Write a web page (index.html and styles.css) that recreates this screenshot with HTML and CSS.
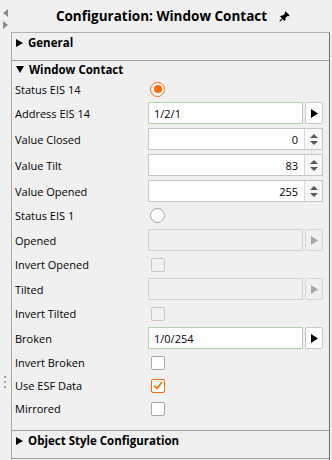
FILE: index.html
```html
<!DOCTYPE html>
<html>
<head>
<meta charset="utf-8">
<link rel="stylesheet" href="styles.css">
</head>
<body>
<div class="app">
  <div class="side">
    <svg class="arr" width="5" height="8" viewBox="0 0 5 8"><path d="M5 0 L0 4 L5 8 Z" fill="#8a8a8a"/></svg>
    <svg class="arr" width="5" height="8" viewBox="0 0 5 8"><path d="M0 0 L5 4 L0 8 Z" fill="#8a8a8a"/></svg>
    <div class="grip"><i></i><i></i><i></i></div>
  </div>
  <div class="main">
    <div class="title">
      <span>Configuration: Window Contact</span>
      <svg width="11" height="11" viewBox="0 0 16 16"><path d="M9.5 0.5 L15.5 6.5 L14 7.5 L12.3 7.3 L9.3 10.3 L9.6 12.8 L8 14.4 L1.6 8 L3.2 6.4 L5.7 6.7 L8.7 3.7 L8.5 2 Z" fill="#000"/><path d="M5 11 L1 15" stroke="#000" stroke-width="1.6"/></svg>
    </div>
    <div class="panel">
      <section class="sec collapsed">
        <div class="sec-head"><svg width="7" height="8" viewBox="0 0 7 8"><path d="M0 0 L7 4 L0 8 Z"/></svg><span>General</span></div>
      </section>
      <section class="sec open">
        <div class="sec-head"><svg width="8" height="7" viewBox="0 0 8 7"><path d="M0 0 L8 0 L4 7 Z"/></svg><span>Window Contact</span></div>
        <div class="row first"><span class="lbl">Status EIS 14</span><span class="radio on"></span></div>
        <div class="row inp"><span class="lbl">Address EIS 14</span><div class="ctl"><div class="field green">1/2/1</div><div class="btn"><svg width="7" height="9" viewBox="0 0 7 9"><path d="M0 0 L7 4.5 L0 9 Z"/></svg></div></div></div>
        <div class="row inp"><span class="lbl">Value Closed</span><div class="ctl"><div class="num"><span class="val">0</span><span class="spin"><svg width="8" height="11" viewBox="0 0 8 11"><path d="M0 4 L4 0 L8 4 Z M0 7 L8 7 L4 11 Z" fill="#5a5a5a"/></svg></span></div></div></div>
        <div class="row inp"><span class="lbl">Value Tilt</span><div class="ctl"><div class="num"><span class="val">83</span><span class="spin"><svg width="8" height="11" viewBox="0 0 8 11"><path d="M0 4 L4 0 L8 4 Z M0 7 L8 7 L4 11 Z" fill="#5a5a5a"/></svg></span></div></div></div>
        <div class="row inp"><span class="lbl">Value Opened</span><div class="ctl"><div class="num"><span class="val">255</span><span class="spin"><svg width="8" height="11" viewBox="0 0 8 11"><path d="M0 4 L4 0 L8 4 Z M0 7 L8 7 L4 11 Z" fill="#5a5a5a"/></svg></span></div></div></div>
        <div class="row chk"><span class="lbl">Status EIS 1</span><span class="radio"></span></div>
        <div class="row inp"><span class="lbl">Opened</span><div class="ctl"><div class="field dis"></div><div class="btn dis"><svg width="7" height="9" viewBox="0 0 7 9"><path d="M0 0 L7 4.5 L0 9 Z"/></svg></div></div></div>
        <div class="row chk"><span class="lbl">Invert Opened</span><span class="box dis"></span></div>
        <div class="row inp"><span class="lbl">Tilted</span><div class="ctl"><div class="field dis"></div><div class="btn dis"><svg width="7" height="9" viewBox="0 0 7 9"><path d="M0 0 L7 4.5 L0 9 Z"/></svg></div></div></div>
        <div class="row chk"><span class="lbl">Invert Tilted</span><span class="box dis"></span></div>
        <div class="row inp"><span class="lbl">Broken</span><div class="ctl"><div class="field green">1/0/254</div><div class="btn"><svg width="7" height="9" viewBox="0 0 7 9"><path d="M0 0 L7 4.5 L0 9 Z"/></svg></div></div></div>
        <div class="row chk"><span class="lbl">Invert Broken</span><span class="box"></span></div>
        <div class="row chk"><span class="lbl">Use ESF Data</span><span class="box on"><svg width="10" height="9" viewBox="0 0 10 9"><path d="M1 4.5 L4 7.5 L9 1" fill="none" stroke="#ff6a00" stroke-width="1.6"/></svg></span></div>
        <div class="row chk"><span class="lbl">Mirrored</span><span class="box"></span></div>
      </section>
      <section class="sec collapsed last">
        <div class="sec-head"><svg width="7" height="8" viewBox="0 0 7 8"><path d="M0 0 L7 4 L0 8 Z"/></svg><span>Object Style Configuration</span></div>
      </section>
    </div>
  </div>
</div>
</body>
</html>
```
FILE: styles.css
```css
* { box-sizing: border-box; }
html, body {
  margin: 0;
  padding: 0;
  background: #f0f0f0;
}
body {
  width: 332px;
  height: 460px;
  overflow: hidden;
  font-family: "Open Sans", "Noto Sans", sans-serif;
  font-size: 11px;
  color: #000;
}
.app {
  display: flex;
  height: 460px;
}
.side {
  width: 11px;
  flex: none;
  display: flex;
  flex-direction: column;
  align-items: flex-start;
  padding: 9px 0 0 3px;
  gap: 4px;
}
.arr { display: block; }
.grip {
  margin-top: 343px;
  margin-left: 1px;
  display: flex;
  flex-direction: column;
  gap: 3px;
}
.grip i {
  display: block;
  width: 2px;
  height: 2px;
  background: #a0a0a0;
}
.main {
  flex: 1;
  display: flex;
  flex-direction: column;
  min-width: 0;
}
.title {
  height: 32px;
  flex: none;
  display: flex;
  align-items: center;
  justify-content: center;
  gap: 12px;
  padding-left: 3px;
  font-weight: 700;
  font-size: 13.5px;
}
.panel {
  flex: 1;
  margin-right: 2px;
  border-top: 1px solid #b0b0b0;
  border-left: 1px solid #a8a8a8;
  border-right: 1px solid #707070;
}
.sec {
  border-bottom: 1px solid #a0a0a0;
}
.sec.collapsed {
  height: 28px;
  padding-top: 1px;
}
.sec.open {
  padding-bottom: 10px;
}
.sec-head {
  height: 17px;
  display: flex;
  align-items: center;
  gap: 5px;
  padding-left: 4px;
  font-weight: 700;
  font-size: 11.5px;
}
.sec-head svg { fill: #000; flex: none; }
.row {
  display: grid;
  grid-template-columns: 133px 175px;
  align-items: center;
  padding-left: 3px;
}
.row.first { height: 22px; }
.row.chk { height: 23px; }
.row.inp { height: 26px; }
.lbl { white-space: nowrap; }
.ctl {
  display: flex;
  gap: 2px;
  height: 22px;
}
.field {
  width: 157px;
  height: 22px;
  background: #fff;
  border: 1px solid #c6c6c6;
  padding: 0 5px;
  display: flex;
  align-items: center;
}
.field.green { border-color: #b5d1a8; }
.field.dis {
  background: #f0f0f0;
  border-color: #d2d2d2;
}
.btn {
  width: 18px;
  height: 22px;
  border: 1px solid #c8c8c8;
  border-radius: 2px;
  background: #fff;
  display: flex;
  align-items: center;
  justify-content: center;
}
.btn svg { fill: #000; }
.btn.dis {
  background: #f0f0f0;
  border-color: #d6d6d6;
}
.btn.dis svg { fill: #a8a8a8; }
.num {
  width: 175px;
  height: 22px;
  background: #fff;
  border: 1px solid #c6c6c6;
  display: flex;
}
.val {
  flex: 1;
  text-align: right;
  padding-right: 6px;
  display: flex;
  align-items: center;
  justify-content: flex-end;
}
.spin {
  width: 18px;
  border-left: 1px solid #d8d8d8;
  background: #f7f7f7;
  display: flex;
  align-items: center;
  justify-content: center;
}
.radio {
  width: 15px;
  height: 15px;
  margin-left: 2px;
  border-radius: 50%;
  border: 1px solid #a6a6a6;
  background: #fff;
  display: flex;
  align-items: center;
  justify-content: center;
}
.radio.on { border-color: #ff6a00; }
.radio.on::after {
  content: "";
  width: 8px;
  height: 8px;
  border-radius: 50%;
  background: #ff6a00;
}
.box {
  width: 14px;
  height: 14px;
  margin-left: 3px;
  border: 1px solid #a8a8a8;
  border-radius: 2px;
  background: #fff;
  display: flex;
  align-items: center;
  justify-content: center;
}
.box.dis {
  background: #f2f2f2;
  border-color: #c8c8c8;
}
.box.on { border-color: #ff6a00; }
```
